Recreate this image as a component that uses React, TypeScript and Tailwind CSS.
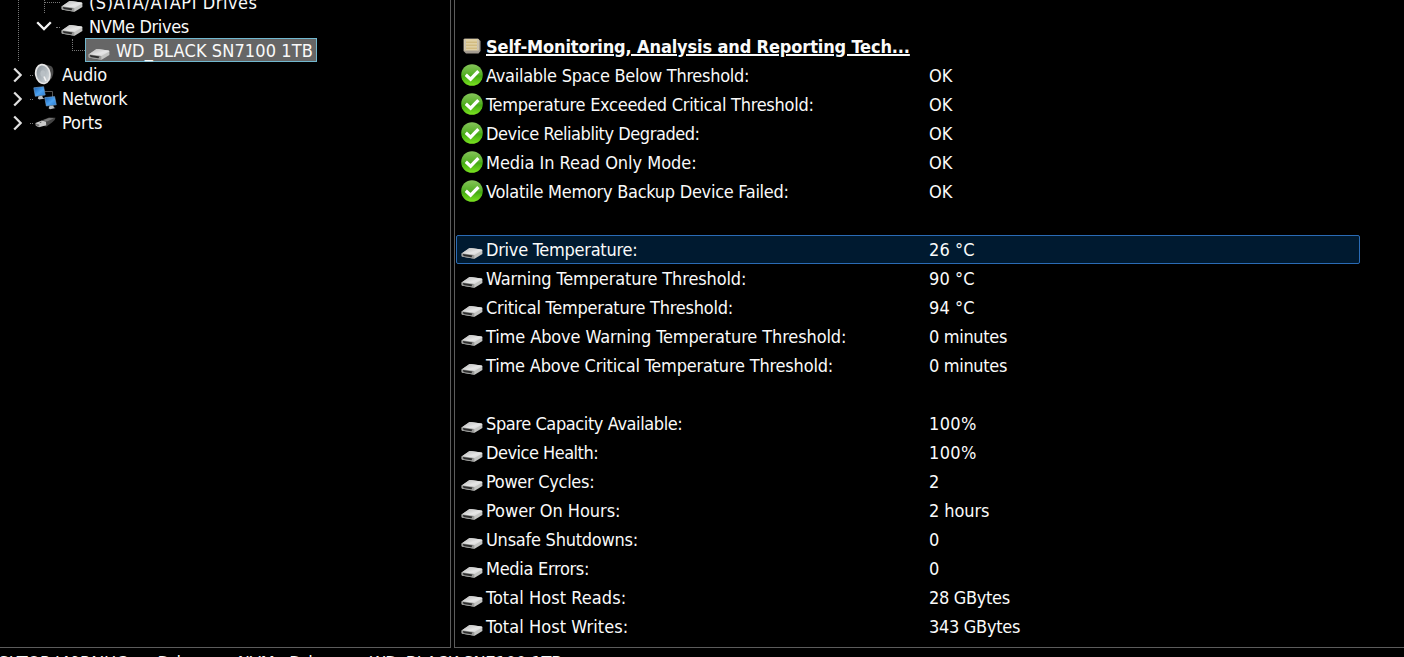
import React from "react";

type RowKind = "ok" | "drive" | "header" | "blank";

interface Row {
  kind: RowKind;
  label?: string;
  value?: string;
  // letter spacing classes for the label and the value
  track?: string;
  valueTrack?: string;
  selected?: boolean;
}

const rows: Row[] = [
  { kind: "header", label: "Self-Monitoring, Analysis and Reporting Tech...", track: "tracking-[-0.13px]" },
  { kind: "ok", label: "Available Space Below Threshold:", value: "OK", track: "tracking-[-0.27px]" },
  { kind: "ok", label: "Temperature Exceeded Critical Threshold:", value: "OK", track: "tracking-[-0.27px]" },
  { kind: "ok", label: "Device Reliablity Degraded:", value: "OK", track: "tracking-[-0.44px]" },
  { kind: "ok", label: "Media In Read Only Mode:", value: "OK", track: "tracking-[-0.04px]" },
  { kind: "ok", label: "Volatile Memory Backup Device Failed:", value: "OK", track: "tracking-[-0.27px]" },
  { kind: "blank" },
  { kind: "drive", label: "Drive Temperature:", value: "26 °C", track: "tracking-[-0.26px]", valueTrack: "tracking-[0.1px]", selected: true },
  { kind: "drive", label: "Warning Temperature Threshold:", value: "90 °C", track: "tracking-[-0.13px]", valueTrack: "tracking-[0.1px]" },
  { kind: "drive", label: "Critical Temperature Threshold:", value: "94 °C", track: "tracking-[-0.24px]", valueTrack: "tracking-[0.1px]" },
  { kind: "drive", label: "Time Above Warning Temperature Threshold:", value: "0 minutes", track: "tracking-[-0.11px]", valueTrack: "tracking-[-0.33px]" },
  { kind: "drive", label: "Time Above Critical Temperature Threshold:", value: "0 minutes", track: "tracking-[-0.19px]", valueTrack: "tracking-[-0.33px]" },
  { kind: "blank" },
  { kind: "drive", label: "Spare Capacity Available:", value: "100%", track: "tracking-[-0.4px]", valueTrack: "tracking-[0.35px]" },
  { kind: "drive", label: "Device Health:", value: "100%", track: "tracking-[-0.5px]", valueTrack: "tracking-[0.35px]" },
  { kind: "drive", label: "Power Cycles:", value: "2", track: "tracking-[-0.3px]" },
  { kind: "drive", label: "Power On Hours:", value: "2 hours", track: "tracking-[-0.04px]", valueTrack: "tracking-[-0.1px]" },
  { kind: "drive", label: "Unsafe Shutdowns:", value: "0", track: "tracking-[-0.24px]" },
  { kind: "drive", label: "Media Errors:", value: "0", track: "tracking-[-0.3px]" },
  { kind: "drive", label: "Total Host Reads:", value: "28 GBytes", track: "tracking-[0.06px]", valueTrack: "tracking-[-0.33px]" },
  { kind: "drive", label: "Total Host Writes:", value: "343 GBytes", track: "tracking-[0.06px]", valueTrack: "tracking-[-0.3px]" },
];

function DriveIcon() {
  return (
    <svg width="22" height="12" viewBox="0 0 22 12" className="shrink-0">
      <defs>
        <linearGradient id="driveTop" x1="0" y1="0" x2="1" y2="1">
          <stop offset="0" stopColor="#b4b4b4" />
          <stop offset="0.6" stopColor="#e6e6e6" />
          <stop offset="1" stopColor="#cfcfcf" />
        </linearGradient>
      </defs>
      <path d="M0.6 6.4 L8.5 1.1 Q9 0.8 9.8 0.9 L20.6 2.6 Q21.4 2.8 21.4 3.6 V7 L13.6 11.7 L1.6 9.8 Q0.6 9.6 0.6 8.8 Z" fill="#c3c4c2" />
      <path d="M0.6 6.4 L8.5 1.1 Q9 0.8 9.8 0.9 L20.6 2.6 L21.3 3.4 L13.3 7.9 Z" fill="url(#driveTop)" />
      <path d="M0.6 6.3 L13.3 7.9 V11.7 L1.6 9.8 Q0.6 9.6 0.6 8.8 Z" fill="#9b9c9a" />
      <path d="M1.8 7 L11.6 8.4 L10.4 10.2 L2.6 9 Z" fill="#2c2c2c" />
    </svg>
  );
}

function CheckIcon() {
  return (
    <svg width="22" height="22" viewBox="0 0 22 22">
      <defs>
        <linearGradient id="okFill" x1="0" y1="0" x2="0" y2="1">
          <stop offset="0" stopColor="#86c45a" />
          <stop offset="0.48" stopColor="#55b026" />
          <stop offset="0.55" stopColor="#43a812" />
          <stop offset="1" stopColor="#7be420" />
        </linearGradient>
      </defs>
      <circle cx="11" cy="11" r="10.8" fill="url(#okFill)" />
      <path d="M4.8 10.8 L9.6 15.2 L17.4 7.2" fill="none" stroke="#fff" strokeWidth="3.2" />
    </svg>
  );
}

function ChipIcon() {
  return (
    <svg width="18" height="16" viewBox="0 0 18 16">
      <path d="M1.5 0.5 H15 L17.5 3 V13 L15.5 15.5 H3 L0.5 13 V1.5 Z" fill="#a39b90" />
      <rect x="1" y="1" width="14.8" height="11.6" rx="1.2" fill="#e0d0a4" />
      <path d="M3 4.2 H14 M3 7.2 H14 M3 10.2 H14" stroke="#c9af6c" strokeWidth="0.9" />
      <path d="M2.2 1.5 V12.2 M14.8 1.5 V12.2" stroke="#c8c0b2" strokeWidth="1.4" />
    </svg>
  );
}

function SpeakerIcon() {
  return (
    <svg width="22" height="22" viewBox="0 0 22 22">
      <defs>
        <linearGradient id="cone" x1="0" y1="0" x2="1" y2="1">
          <stop offset="0" stopColor="#848e96" />
          <stop offset="1" stopColor="#d8dde0" />
        </linearGradient>
      </defs>
      <path d="M8 0.7 L17 3 Q20 5 19.2 11 Q18.5 15.5 15.5 17.5 L10 21 Z" fill="#4c4c4c" />
      <ellipse cx="8.8" cy="11" rx="7.9" ry="10.4" transform="rotate(-10 8.8 11)" fill="#e6e6e6" />
      <ellipse cx="8.9" cy="11.1" rx="6.2" ry="8.7" transform="rotate(-10 8.9 11.1)" fill="url(#cone)" />
      <ellipse cx="8.8" cy="10.6" rx="2.4" ry="3.4" fill="#b9c0c5" />
      <path d="M10 13.5 L12 18" stroke="#f2f2f2" strokeWidth="1.6" />
    </svg>
  );
}

function NetworkIcon() {
  return (
    <svg width="24" height="24" viewBox="0 0 24 24">
      <defs>
        <linearGradient id="screen" x1="0" y1="0" x2="1" y2="1">
          <stop offset="0" stopColor="#175db0" />
          <stop offset="0.55" stopColor="#4ba2f0" />
          <stop offset="1" stopColor="#2577d0" />
        </linearGradient>
      </defs>
      <path d="M12 5.5 H19.5 V11" fill="none" stroke="#555" />
      <path d="M0.8 1.8 L10.6 0.7 L12.2 9 L2.3 10.3 Z" fill="url(#screen)" stroke="#79a6d2" strokeWidth="0.6" />
      <path d="M5.6 10.3 L9.2 9.7 L10 12 L12 12.4 L6.2 13.5 L4.8 12.6 Z" fill="#b9bec2" />
      <path d="M11.8 11.6 L21.6 10.6 L23.3 18.8 L13.3 20 Z" fill="url(#screen)" stroke="#79a6d2" strokeWidth="0.6" />
      <path d="M16.5 20 L20.2 19.4 L21 21.6 L22.5 22 L17 23.3 L15.6 22.3 Z" fill="#b9bec2" />
    </svg>
  );
}

function PortIcon() {
  return (
    <svg width="21" height="11" viewBox="0 0 21 11">
      <path d="M7.5 3 L14 0.5 L20.5 0.8 Q20.5 3 17 5.5 L11.5 9.5 Q8.5 9.6 7.2 7.5 Z" fill="#444" />
      <path d="M8 3.2 L14 1.1 L19 1.2 L12 4.5 Z" fill="#777" />
      <path d="M0.5 6 L6.8 3.6 L11 4.8 L11.2 8.3 L4 10.2 L0.8 8.8 Z" fill="#c9c9c9" />
      <path d="M0.8 6.5 L4.3 7.4 V9.7 L1 8.5 Z" fill="#777" />
      <path d="M4.8 5.6 L6.4 5.1" stroke="#5b5b5b" strokeWidth="1" />
    </svg>
  );
}

function Chevron({ open = false }: { open?: boolean }) {
  return open ? (
    <svg width="16" height="10" viewBox="0 0 16 10">
      <path d="M1.2 1.2 L8 8 L14.8 1.2" fill="none" stroke="#f4f4f4" strokeWidth="2.3" />
    </svg>
  ) : (
    <svg width="10" height="16" viewBox="0 0 10 16">
      <path d="M2.2 1.5 L8.7 8 L2.2 14.5" fill="none" stroke="#e0e0e0" strokeWidth="2.3" />
    </svg>
  );
}

function RowIcon({ kind }: { kind: RowKind }) {
  if (kind === "header") return <span className="pb-[2px]"><ChipIcon /></span>;
  if (kind === "ok") return <span className="pb-[2px]"><CheckIcon /></span>;
  return <span className="pt-[7px]"><DriveIcon /></span>;
}

function TreeRoot({ icon, label, track = "" }: { icon: React.ReactNode; label: string; track?: string }) {
  return (
    <div className="flex h-6 items-center pl-3">
      <span className="flex w-[18px] pb-px"><Chevron /></span>
      <span className="w-[3px] border-t border-dotted border-[#777]" />
      <span className="flex w-[24px] justify-center pb-[2px]">{icon}</span>
      <span className={`pl-[5px] ${track}`}>{label}</span>
    </div>
  );
}

function DeviceTree() {
  return (
    <aside className="h-[648px] w-[451px] shrink-0 overflow-hidden border-r border-b border-[#5c5c5c]">
      <div className="-mt-[9px] flex">
        <div className="ml-[18px] h-[70px] w-[26px] border-l border-dotted border-[#777]" />
        <div className="w-[360px]">
          <div className="flex h-6 items-center">
            <span className="h-[22px] w-[16px] self-start border-l border-dotted border-[#777] pt-[11px]">
              <span className="block w-full border-t border-dotted border-[#777]" />
            </span>
            <span className="w-[24px] pt-[6px] pl-[1px]"><DriveIcon /></span>
            <span className="pl-[5px] tracking-[0.55px]">(S)ATA/ATAPI Drives</span>
          </div>
          <div className="flex h-6 items-center">
            <span className="-ml-[8px] flex w-[20px] pb-[2px]"><Chevron open /></span>
            <span className="w-[4px] border-t border-dotted border-[#777]" />
            <span className="w-[24px] pt-[6px] pl-[1px]"><DriveIcon /></span>
            <span className="pl-[5px] tracking-[-0.36px]">NVMe Drives</span>
          </div>
          <div className="flex h-6 items-center pl-[28px]">
            <span className="h-3 w-[13px] self-start border-b border-l border-dotted border-[#777]" />
            <div className="mb-[2px] flex h-6 w-[232px] items-center border border-[#72b8cf] bg-[#666]">
              <span className="w-[24px] pt-[7px] pl-[2px]"><DriveIcon /></span>
              <span className="pt-[2px] pl-[6px] tracking-[0.1px] whitespace-nowrap">WD_BLACK SN7100 1TB</span>
            </div>
          </div>
        </div>
      </div>
      <TreeRoot icon={<SpeakerIcon />} label="Audio" track="tracking-[-0.2px]" />
      <TreeRoot icon={<NetworkIcon />} label="Network" track="tracking-[-0.35px]" />
      <TreeRoot icon={<PortIcon />} label="Ports" />
    </aside>
  );
}

function DetailRow({ row }: { row: Row }) {
  const frame = row.selected ? "border-[#2a6bb5] bg-[#001a30]" : "border-transparent";
  return (
    <div className={`flex h-[29px] w-[904px] items-center rounded-[2px] border ${frame}`}>
      {row.kind !== "blank" && (
        <>
          <span className="flex w-[29px] justify-center pl-[1px]"><RowIcon kind={row.kind} /></span>
          <span className="w-[443px] whitespace-nowrap">
            <span className={`${row.track ?? ""} ${row.kind === "header" ? "font-bold underline decoration-2 underline-offset-1" : ""}`}>
              {row.label}
            </span>
          </span>
          <span className={`whitespace-nowrap ${row.valueTrack ?? ""}`}>{row.value}</span>
        </>
      )}
    </div>
  );
}

export default function App() {
  return (
    <div className="flex h-[657px] w-[1404px] flex-col overflow-hidden bg-black font-['DejaVu_Sans_Condensed','DejaVu_Sans',sans-serif] text-[18px] leading-6 text-[#fafafa] [font-stretch:condensed]">
      <div className="flex h-[648px] shrink-0 gap-[3px]">
        <DeviceTree />
        <main className="flex-1 border-b border-l border-[#5c5c5c] pt-8 pl-[1px]">
          {rows.map((row, i) => (
            <DetailRow key={i} row={row} />
          ))}
        </main>
      </div>
      <footer className="h-[9px] shrink-0 overflow-hidden pt-[3px] whitespace-pre">
        <span className="-ml-[24px] tracking-[-0.12px]">DESKTOP-I49PAJUG -&gt; Drives -&gt; NVMe Drives -&gt; WD_BLACK SN7100 1TB</span>
      </footer>
    </div>
  );
}
